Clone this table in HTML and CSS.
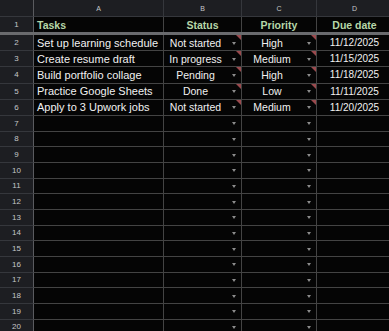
FILE: index.html
```html
<!DOCTYPE html>
<html>
<head>
<meta charset="utf-8">
<link rel="stylesheet" href="styles.css">
</head>
<body>
<div class="sheet">
  <div class="row colhead">
    <div class="rh corner"></div>
    <div class="c a ch">A</div>
    <div class="c b ch">B</div>
    <div class="c cc ch">C</div>
    <div class="c d ch">D</div>
  </div>
  <div class="row r1">
    <div class="rh">1</div>
    <div class="c a hd left">Tasks</div>
    <div class="c b hd">Status</div>
    <div class="c cc hd">Priority</div>
    <div class="c d hd">Due date</div>
  </div>
  <div class="freeze"></div>
  <div class="row tall first">
    <div class="rh">2</div>
    <div class="c a task">Set up learning schedule</div>
    <div class="c b dd flag"><span class="v">Not started</span><i class="arr"></i></div>
    <div class="c cc dd flag"><span class="v">High</span><i class="arr"></i></div>
    <div class="c d date">11/12/2025</div>
  </div>
  <div class="row tall">
    <div class="rh">3</div>
    <div class="c a task">Create resume draft</div>
    <div class="c b dd flag"><span class="v">In progress</span><i class="arr"></i></div>
    <div class="c cc dd flag"><span class="v">Medium</span><i class="arr"></i></div>
    <div class="c d date">11/15/2025</div>
  </div>
  <div class="row tall">
    <div class="rh">4</div>
    <div class="c a task">Build portfolio collage</div>
    <div class="c b dd flag"><span class="v">Pending</span><i class="arr"></i></div>
    <div class="c cc dd flag"><span class="v">High</span><i class="arr"></i></div>
    <div class="c d date">11/18/2025</div>
  </div>
  <div class="row tall">
    <div class="rh">5</div>
    <div class="c a task">Practice Google Sheets</div>
    <div class="c b dd flag"><span class="v">Done</span><i class="arr"></i></div>
    <div class="c cc dd flag"><span class="v">Low</span><i class="arr"></i></div>
    <div class="c d date">11/11/2025</div>
  </div>
  <div class="row tall">
    <div class="rh">6</div>
    <div class="c a task">Apply to 3 Upwork jobs</div>
    <div class="c b dd flag"><span class="v">Not started</span><i class="arr"></i></div>
    <div class="c cc dd flag"><span class="v">Medium</span><i class="arr"></i></div>
    <div class="c d date">11/20/2025</div>
  </div>
  <div class="row"><div class="rh">7</div><div class="c a"></div><div class="c b dd"><span class="v"></span><i class="arr"></i></div><div class="c cc dd"><span class="v"></span><i class="arr"></i></div><div class="c d"></div></div>
  <div class="row"><div class="rh">8</div><div class="c a"></div><div class="c b dd"><span class="v"></span><i class="arr"></i></div><div class="c cc dd"><span class="v"></span><i class="arr"></i></div><div class="c d"></div></div>
  <div class="row"><div class="rh">9</div><div class="c a"></div><div class="c b dd"><span class="v"></span><i class="arr"></i></div><div class="c cc dd"><span class="v"></span><i class="arr"></i></div><div class="c d"></div></div>
  <div class="row"><div class="rh">10</div><div class="c a"></div><div class="c b dd"><span class="v"></span><i class="arr"></i></div><div class="c cc dd"><span class="v"></span><i class="arr"></i></div><div class="c d"></div></div>
  <div class="row"><div class="rh">11</div><div class="c a"></div><div class="c b dd"><span class="v"></span><i class="arr"></i></div><div class="c cc dd"><span class="v"></span><i class="arr"></i></div><div class="c d"></div></div>
  <div class="row"><div class="rh">12</div><div class="c a"></div><div class="c b dd"><span class="v"></span><i class="arr"></i></div><div class="c cc dd"><span class="v"></span><i class="arr"></i></div><div class="c d"></div></div>
  <div class="row"><div class="rh">13</div><div class="c a"></div><div class="c b dd"><span class="v"></span><i class="arr"></i></div><div class="c cc dd"><span class="v"></span><i class="arr"></i></div><div class="c d"></div></div>
  <div class="row"><div class="rh">14</div><div class="c a"></div><div class="c b dd"><span class="v"></span><i class="arr"></i></div><div class="c cc dd"><span class="v"></span><i class="arr"></i></div><div class="c d"></div></div>
  <div class="row"><div class="rh">15</div><div class="c a"></div><div class="c b dd"><span class="v"></span><i class="arr"></i></div><div class="c cc dd"><span class="v"></span><i class="arr"></i></div><div class="c d"></div></div>
  <div class="row"><div class="rh">16</div><div class="c a"></div><div class="c b dd"><span class="v"></span><i class="arr"></i></div><div class="c cc dd"><span class="v"></span><i class="arr"></i></div><div class="c d"></div></div>
  <div class="row"><div class="rh">17</div><div class="c a"></div><div class="c b dd"><span class="v"></span><i class="arr"></i></div><div class="c cc dd"><span class="v"></span><i class="arr"></i></div><div class="c d"></div></div>
  <div class="row"><div class="rh">18</div><div class="c a"></div><div class="c b dd"><span class="v"></span><i class="arr"></i></div><div class="c cc dd"><span class="v"></span><i class="arr"></i></div><div class="c d"></div></div>
  <div class="row"><div class="rh">19</div><div class="c a"></div><div class="c b dd"><span class="v"></span><i class="arr"></i></div><div class="c cc dd"><span class="v"></span><i class="arr"></i></div><div class="c d"></div></div>
  <div class="row"><div class="rh">20</div><div class="c a"></div><div class="c b dd"><span class="v"></span><i class="arr"></i></div><div class="c cc dd"><span class="v"></span><i class="arr"></i></div><div class="c d"></div></div>
</div>
</body>
</html>
```
FILE: styles.css
```css
html, body {
  margin: 0;
  padding: 0;
  background: #050505;
  overflow: hidden;
}
.sheet {
  width: 400px;
  font-family: "Liberation Sans", Arial, sans-serif;
  color: #f1f1f1;
}
.row {
  display: flex;
  height: 15.67px;
  box-sizing: border-box;
}
.row.tall { height: 16.25px; }
.row.tall.first { height: 16px; }
.rh {
  width: 34px;
  flex: none;
  box-sizing: border-box;
  background: #1d1e22;
  border-right: 1px solid #5a5b5f;
  border-bottom: 1px solid #35373c;
  color: #c4c6c9;
  font-size: 8px;
  display: flex;
  align-items: center;
  justify-content: center;
}
.c {
  flex: none;
  box-sizing: border-box;
  border-right: 1px solid #444;
  border-bottom: 1px solid #444;
  display: flex;
  align-items: center;
  justify-content: center;
  position: relative;
  white-space: nowrap;
  overflow: hidden;
}
.a { width: 130px; }
.b { width: 78px; }
.cc { width: 75px; }
.d { width: 76px; }
.colhead { height: 17px; }
.colhead .rh, .colhead .c {
  background: #1d1e22;
  border-bottom: 1px solid #35373c;
  border-right: 1px solid #35373c;
}
.colhead .rh { border-right: 1px solid #5a5b5f; }
.ch {
  color: #c4c6c9;
  font-size: 7px;
}
.r1 { height: 15px; }
.r1 .c, .r1 .rh { border-bottom: none; }
.hd {
  color: #b6d7a8;
  font-weight: bold;
  font-size: 10.5px;
}
.left { justify-content: flex-start; padding-left: 3px; }
.freeze {
  height: 3px;
  background: #6a6b6e;
}
.task {
  justify-content: flex-start;
  padding-left: 3px;
  font-size: 11px;
}
.date { font-size: 10px; }
.dd { justify-content: flex-start; }
.dd .v {
  flex: 1;
  text-align: center;
  font-size: 10.5px;
}
.arr {
  flex: none;
  width: 0;
  height: 0;
  border-left: 2.5px solid transparent;
  border-right: 2.5px solid transparent;
  border-top: 3px solid #8c8c8c;
  margin: 1px 5px 0 5px;
}
.flag::after {
  content: "";
  position: absolute;
  top: 0;
  right: 0;
  width: 0;
  height: 0;
  border-left: 5px solid transparent;
  border-top: 5px solid #9a4a4e;
}
```
